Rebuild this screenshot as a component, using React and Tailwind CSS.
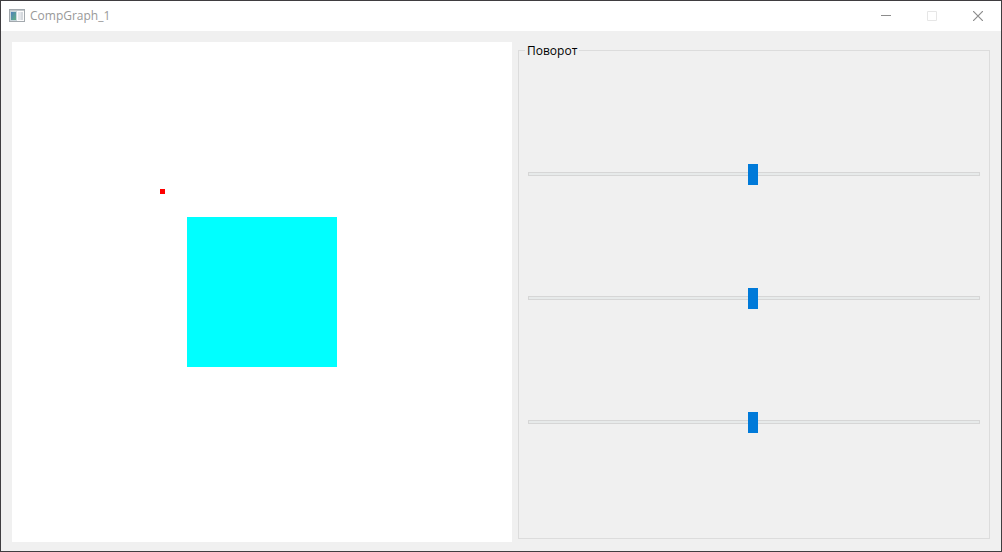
const AXES = ["X", "Y", "Z"];

function AppIcon() {
  return (
    <svg width="16" height="14" viewBox="0 0 16 14" shapeRendering="crispEdges" aria-hidden="true">
      <defs>
        <linearGradient id="pane" x1="0" y1="0" x2="1" y2="1">
          <stop offset="0" stopColor="#4f80bc" />
          <stop offset="1" stopColor="#62b183" />
        </linearGradient>
      </defs>
      <rect x="0.5" y="0.5" width="15" height="12" fill="#fcfcfc" stroke="#a3a9ae" />
      <rect x="1" y="1" width="14" height="1" fill="#c3c8cc" />
      <rect x="1" y="2" width="7" height="10" fill="#c9d6dc" />
      <rect x="2" y="3" width="5" height="8" fill="url(#pane)" />
      <rect x="9" y="3" width="3" height="8" fill="#e3e6ea" />
      <rect x="12" y="3" width="2" height="8" fill="#d5d9de" />
    </svg>
  );
}

function CaptionButton({ label, disabled, children }) {
  return (
    <button
      type="button"
      aria-label={label}
      disabled={disabled}
      className="flex w-[46px] items-center justify-center text-[#8c8c8c] enabled:hover:bg-[#e5e5e5] disabled:text-[#e6e6e6]"
    >
      <svg width="10" height="10" viewBox="0 0 10 10" fill="none" stroke="currentColor">
        {children}
      </svg>
    </button>
  );
}

function TitleBar() {
  return (
    <header className="flex h-[30px] shrink-0 bg-white">
      <div className="flex flex-1 items-center gap-[5px] pl-2">
        <AppIcon />
        <h1 className="text-[12px] leading-4 text-[#999999]">CompGraph_1</h1>
      </div>
      <CaptionButton label="Свернуть">
        <path d="M0 4.5H10" />
      </CaptionButton>
      <CaptionButton label="Развернуть" disabled>
        <path d="M0.5 0.5H9.5V9.5H0.5Z" />
      </CaptionButton>
      <CaptionButton label="Закрыть">
        <path d="M0 0L10 10M10 0L0 10" strokeWidth="1.2" />
      </CaptionButton>
    </header>
  );
}

function Scene() {
  return (
    <div className="w-[500px] shrink-0 bg-white">
      <svg width="500" height="500" viewBox="0 0 500 500" shapeRendering="crispEdges" aria-hidden="true">
        <rect x="175" y="175" width="150" height="150" fill="#00ffff" />
        <rect x="148" y="147" width="5" height="5" fill="#ff0000" />
      </svg>
    </div>
  );
}

function RotationSlider({ axis }) {
  return (
    <input
      type="range"
      min="-179"
      max="180"
      defaultValue="0"
      aria-label={axis}
      className="block h-[21px] w-full appearance-none bg-transparent [&::-webkit-slider-runnable-track]:h-1 [&::-webkit-slider-runnable-track]:border [&::-webkit-slider-runnable-track]:border-[#d6d6d6] [&::-webkit-slider-runnable-track]:bg-[#e7eaea] [&::-webkit-slider-thumb]:-mt-[9px] [&::-webkit-slider-thumb]:h-[21px] [&::-webkit-slider-thumb]:w-[10px] [&::-webkit-slider-thumb]:appearance-none [&::-webkit-slider-thumb]:bg-[#007ad9]"
    />
  );
}

export default function App() {
  return (
    <div className="flex min-h-screen flex-col border border-[#3f3d40] bg-[#f0f0f0] font-['Open_Sans','Noto_Sans',sans-serif]">
      <TitleBar />
      <main className="flex flex-1 gap-[6px] px-[11px] pt-[11px] pb-[9px]">
        <Scene />
        <div className="flex min-w-0 flex-1 pb-[3px]">
          <fieldset className="flex min-w-0 flex-1 flex-col justify-evenly border border-[#dcdcdc] px-[9px] pt-px pb-[3px]">
            <legend className="-ml-[3px] px-[2px] text-[12px] leading-[17px] text-black">Поворот</legend>
            {AXES.map((axis) => (
              <RotationSlider key={axis} axis={axis} />
            ))}
          </fieldset>
        </div>
      </main>
    </div>
  );
}
